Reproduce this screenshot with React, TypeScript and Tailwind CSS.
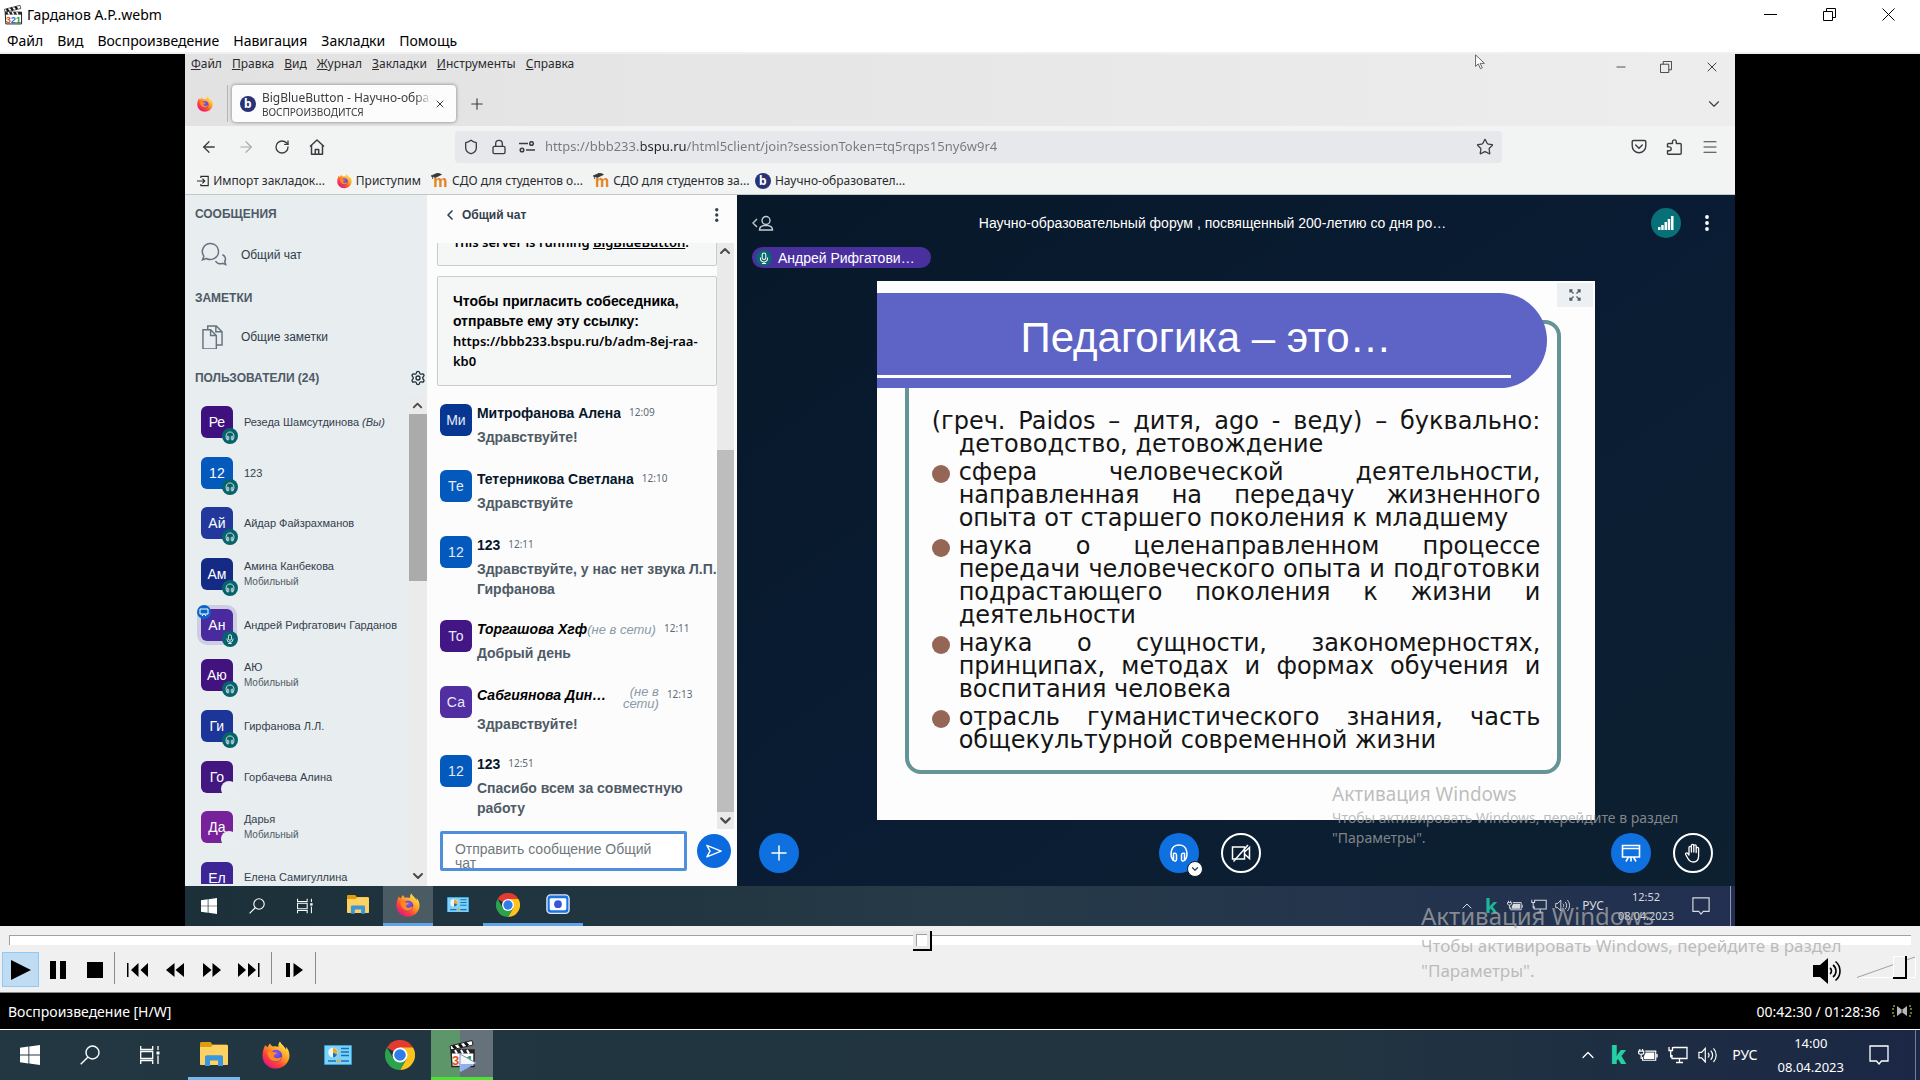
import type { ReactNode } from "react";
import {
  ArrowLeft,
  ArrowRight,
  ChevronDown,
  ChevronLeft,
  ChevronUp,
  Lock,
  Menu,
  Minus,
  Plus,
  RotateCw,
  Settings,
  Shield,
  Star,
  X,
} from "lucide-react";

type IconProps = { className?: string };

const playerMenu = ["Файл", "Вид", "Воспроизведение", "Навигация", "Закладки", "Помощь"];
const browserMenu = ["Файл", "Правка", "Вид", "Журнал", "Закладки", "Инструменты", "Справка"];

const users = [
  { short: "Ре", name: "Резеда Шамсутдинова", you: true, color: "bg-[#3f117f]", badge: "audio" },
  { short: "12", name: "123", color: "bg-[#0459bd]", badge: "audio" },
  { short: "Ай", name: "Айдар Файзрахманов", color: "bg-[#22389c]", badge: "audio" },
  { short: "Ам", name: "Амина Канбекова", mobile: true, color: "bg-[#152a85]", badge: "audio" },
  { short: "Ан", name: "Андрей Рифгатович Гарданов", color: "bg-[#4a2a9f]", badge: "mic" },
  { short: "Аю", name: "АЮ", mobile: true, color: "bg-[#42127f]", badge: "audio" },
  { short: "Ги", name: "Гирфанова Л.Л.", color: "bg-[#1b3598]", badge: "audio" },
  { short: "Го", name: "Горбачева Алина", color: "bg-[#42177f]", badge: "none" },
  { short: "Да", name: "Дарья", mobile: true, color: "bg-[#77219a]", badge: "none" },
  { short: "Ел", name: "Елена Самигуллина", color: "bg-[#3d2596]", badge: "cut" },
];

const messages = [
  { short: "Ми", name: "Митрофанова Алена", time: "12:09", text: "Здравствуйте!", color: "bg-[#073693]" },
  { short: "Те", name: "Тетерникова Светлана", time: "12:10", text: "Здравствуйте", color: "bg-[#0459bd]" },
  { short: "12", name: "123", time: "12:11", text: "Здравствуйте, у нас нет звука Л.П.\nГирфанова", color: "bg-[#0459bd]" },
  { short: "То", name: "Торгашова Хгф", time: "12:11", text: "Добрый день", color: "bg-[#431685]", offline: true },
  { short: "Са", name: "Сабгиянова Динара", time: "12:13", text: "Здравствуйте!", color: "bg-[#512fa3]", offline: true, long: true },
  { short: "12", name: "123", time: "12:51", text: "Спасибо всем за совместную\nработу", color: "bg-[#0459bd]" },
];

const slideItems = [
  "сфера человеческой деятельности, направленная на передачу жизненного опыта от старшего поколения к младшему",
  "наука о целенаправленном процессе передачи человеческого опыта и подготовки подрастающего поколения к жизни и деятельности",
  "наука о сущности, закономерностях, принципах, методах и формах обучения и воспитания человека",
  "отрасль гуманистического знания, часть общекультурной современной жизни",
];

/* ---------- icons ---------- */

const WindowsIcon = ({ className }: IconProps) => (
  <svg viewBox="0 0 20 20" className={className} fill="currentColor">
    <path d="M0 2.8 8.4 1.6v8H0zM9.3 1.5 20 0v9.6H9.3zM0 10.4h8.4v8L0 17.2zM9.3 10.4H20V20L9.3 18.5z" />
  </svg>
);

const SearchIcon = ({ className }: IconProps) => (
  <svg viewBox="0 0 20 20" className={className} fill="none" stroke="currentColor" strokeWidth="1.4">
    <circle cx="12.5" cy="7.5" r="6.5" />
    <path d="M7.8 12.2 .7 19.3" />
  </svg>
);

const TaskViewIcon = ({ className }: IconProps) => (
  <svg viewBox="0 0 20 20" className={className} fill="none" stroke="currentColor" strokeWidth="1.3">
    <path d="M.7 1v3.5h12V1M.7 19v-3.5h12V19M.7 6.5h12v7H.7zM18 1v4M18 10.5V19" />
    <path d="M16.5 6.5h3v3h-3z" fill="currentColor" stroke="none" />
  </svg>
);

const FolderIcon = ({ className }: IconProps) => (
  <svg viewBox="0 0 28 24" className={className}>
    <path d="M0 1.5C0 .7.7 0 1.500 0h9l2 2.500H27V8H0z" fill="#e09c10" />
    <path d="M0 5h11l2-2h14c.6 0 1 .4 1 1v18c0 .6-.4 1-1 1H1c-.6 0-1-.4-1-1z" fill="#fdd262" />
    <path d="M5 24v-9c0-1 .8-1.700 1.700-1.700h14.600c1 0 1.700.8 1.700 1.700v9h-5v-5.500h-8V24z" fill="#3b96dc" />
  </svg>
);

const FirefoxIcon = ({ className }: IconProps) => (
  <svg viewBox="0 0 32 32" className={className}>
    <defs>
      <linearGradient id="fox-body" x1="0.85" y1="0.1" x2="0.2" y2="0.95">
        <stop offset="0" stopColor="#ffe84a" />
        <stop offset="0.4" stopColor="#ff9a24" />
        <stop offset="0.7" stopColor="#ff4139" />
        <stop offset="1" stopColor="#e31587" />
      </linearGradient>
      <radialGradient id="fox-globe" cx="0.5" cy="0.3" r="0.7">
        <stop offset="0" stopColor="#9059ff" />
        <stop offset="1" stopColor="#4b36b4" />
      </radialGradient>
    </defs>
    <path
      d="M20.500.5c-1.600 1.800-2 4-1.600 6.100-2-.8-4.400-1-6.400-.3C11 5.500 9.700 4.400 9.300 2.800 7.900 4 7 5.600 6.700 7.100 5.500 6.800 4.300 5.700 3.800 4.600 1.700 8.200.6 12.500.6 17c0 8.300 6.900 14.500 15.400 14.500S31.400 25 31.400 16.700c0-4.500-1.700-8-4-10.200.3 1.200.3 2.500.1 3.400C26 5.800 22.300 4.500 20.500.5z"
      fill="url(#fox-body)"
    />
    <circle cx="16" cy="17" r="7" fill="url(#fox-globe)" />
    <path d="M6 12.500c2.500-1.600 5-1.300 7 .2 1.200.6 3 .3 4 .8-.5 1.600-3.200 1.900-3.600 3.400-.3 1.800 2 3.300 4.300 2.800 2-.4 3.300-1.700 5-1-1.200 3.300-4 5-7 4.800C10.700 23.200 6.300 19 6 12.500z" fill="#ff8a1f" />
  </svg>
);

const NewsCardIcon = ({ className }: IconProps) => (
  <svg viewBox="0 0 28 20" className={className}>
    <rect width="28" height="20" rx="1" fill="#33a0dc" />
    <rect x="1" y="1" width="26" height="18" fill="#7fd2f7" />
    <circle cx="9" cy="7.500" r="4.800" fill="#e8f6fd" />
    <path d="M9 7.500V3a4.800 4.800 0 0 1 4.300 6.600z" fill="#f5a623" />
    <path d="M9 7.500l4.300 2.100A4.800 4.800 0 0 1 9 12.300z" fill="#1673b8" />
    <path d="M17 3.500h8M17 7h8M17 10.500h8M4 16h8M17 16h8" stroke="#1673b8" strokeWidth="1.500" />
    <circle cx="14.500" cy="16" r="1.500" fill="#f5a623" />
  </svg>
);

const ChromeIcon = ({ className }: IconProps) => (
  <svg viewBox="0 0 32 32" className={className}>
    <path d="M16 16 2.100 8A16 16 0 0 1 29.900 8z" fill="#e33b2e" />
    <path d="M16 16V8h13.900A16 16 0 0 1 16 32l7-12z" fill="#fcc31e" />
    <path d="M16 16l6.900 4L16 32A16 16 0 0 1 2.100 8l7 12z" fill="#2da24c" />
    <circle cx="16" cy="16" r="8" fill="#fff" />
    <circle cx="16" cy="16" r="6.200" fill="#2f7de9" />
  </svg>
);

const CameraAppIcon = ({ className }: IconProps) => (
  <svg viewBox="0 0 26 22" className={className}>
    <rect x="1" y="1" width="24" height="20" rx="4" fill="#1b74e4" stroke="#dfe9f8" strokeWidth="1.500" />
    <rect x="4" y="4.500" width="18" height="13" rx="1.500" fill="#fff" />
    <circle cx="13" cy="11" r="4.200" fill="#3b55d9" />
  </svg>
);

const ClapperIcon = ({ className }: IconProps) => (
  <svg viewBox="0 0 28 28" className={className}>
    <path d="M2 6 24 .5 25 5 3 10z" fill="#fff" stroke="#222" strokeWidth="1" />
    <path d="m5 5.500 3 3.200M11 4l3 3.200M17 2.500l3 3.200" stroke="#111" strokeWidth="3" />
    <path d="M3 10h23v16.500H4z" fill="#fff" stroke="#222" strokeWidth="1.400" />
    <path d="M3 10h23v3.500H3z" fill="#222" />
    <path d="m7 10 2 3.500M13 10l2 3.500M19 10l2 3.500" stroke="#fff" strokeWidth="2" />
    <text x="4" y="25" fontSize="13" fontWeight="700" fill="#d9531e" fontFamily="Liberation Sans">3</text>
    <text x="11" y="25" fontSize="13" fontWeight="700" fill="#2a6fd0" fontFamily="Liberation Sans">2</text>
    <text x="18" y="25" fontSize="13" fontWeight="700" fill="#2b9a33" fontFamily="Liberation Sans">1</text>
  </svg>
);

const HeadphonesIcon = ({ className }: IconProps) => (
  <svg viewBox="0 0 20 20" className={className} fill="none" stroke="currentColor" strokeWidth="1.500">
    <path d="M4.500 17.500C.5 13 1 2 10 2s9.500 11 5.500 15.500" />
    <path d="M4.500 10.500c1.500-.8 3 0 3 1.500v4.500c0 1.500-1.500 2-3 1zM15.500 10.500c-1.500-.8-3 0-3 1.500v4.500c0 1.500 1.500 2 3 1z" />
  </svg>
);

const MicIcon = ({ className }: IconProps) => (
  <svg viewBox="0 0 20 20" className={className} fill="none" stroke="currentColor" strokeWidth="1.700">
    <rect x="7" y="1.500" width="6" height="11" rx="3" />
    <path d="M4 9v1.500a6 6 0 0 0 12 0V9M10 16.500v2.500M6.500 19h7" />
  </svg>
);

const CameraOffIcon = ({ className }: IconProps) => (
  <svg viewBox="0 0 20 20" className={className} fill="none" stroke="currentColor" strokeWidth="1.500">
    <path d="M1.500 4h12v12h-12zM13.500 9l5-4.500v11l-5-4.500" />
    <path d="M2.500 18.500 17 2" />
  </svg>
);

const PresentationIcon = ({ className }: IconProps) => (
  <svg viewBox="0 0 20 20" className={className} fill="none" stroke="currentColor" strokeWidth="1.600">
    <path d="M1.500 2.500h17V14h-17zM1.500 5.500h17M10 14v4.500M7.500 14l-2.500 4.500M12.500 14l2.500 4.500" />
  </svg>
);

const HandIcon = ({ className }: IconProps) => (
  <svg viewBox="0 0 20 20" className={className} fill="none" stroke="currentColor" strokeWidth="1.300" strokeLinejoin="round" strokeLinecap="round">
    <path d="M6 11V4.500a1.200 1.200 0 0 1 2.400 0V9M8.400 9V2.500a1.200 1.200 0 0 1 2.400 0V9M10.800 9V3a1.200 1.200 0 0 1 2.400 0v6.500M13.200 9.500V5.500a1.200 1.200 0 0 1 2.400 0V13c0 3.500-2 6-5.400 6-3 0-4.400-1.700-5.600-4L2.700 11.500c-.6-1.300.9-2.300 1.900-1.200L6 12" />
  </svg>
);

const ChatBubblesIcon = ({ className }: IconProps) => (
  <svg viewBox="0 0 26 26" className={className} fill="none" stroke="currentColor" strokeWidth="1.500">
    <path d="M9.500 1.500a8 8 0 0 1 3 15.400c-2.300 1-5 .7-7-.4l-4 1.300 1.400-3.600A8 8 0 0 1 9.500 1.500z" />
    <path d="M14.500 19c1.200 2.500 4.400 3.600 7 2.300l3.200 1.200-1-3c1.600-2.600.6-5.600-2.300-6.800" />
  </svg>
);

const NotesIcon = ({ className }: IconProps) => (
  <svg viewBox="0 0 22 26" className={className} fill="none" stroke="currentColor" strokeWidth="1.500">
    <path d="M1 5h8l6 6v14H1zM9 5v6h6" />
    <path d="M6 5V1h9l6 6v14h-6M14.500 1v6H21" />
  </svg>
);

const MonitorIcon = ({ className }: IconProps) => (
  <svg viewBox="0 0 20 18" className={className} fill="none" stroke="currentColor" strokeWidth="1.300">
    <path d="M5 1.500h14v11H4V9M8 16.500h7M11.500 12.500v4M1 1v3.500h3.500V1M2.700 4.500v7" />
  </svg>
);

const BatteryIcon = ({ className }: IconProps) => (
  <svg viewBox="0 0 22 16" className={className} fill="none" stroke="currentColor" strokeWidth="1.300">
    <path d="M8 3.500h11.500v10H5V10M21 6.500v4" />
    <path d="M8.500 5h9.500v7H6.500V9z" fill="currentColor" stroke="none" />
    <path d="M2 1v2.500M5 1v2.500M.7 3.500h5.600v2c0 2-5.600 2-5.600 0zM3.500 7v5" />
  </svg>
);

const VolumeIcon = ({ className }: IconProps) => (
  <svg viewBox="0 0 22 18" className={className} fill="none" stroke="currentColor" strokeWidth="1.300">
    <path d="M1 6h3l4-4.500v15L4 12H1zM11 6.500c1.300 1.400 1.300 3.600 0 5M14 4c2.700 2.800 2.700 7.200 0 10M17 1.500c4 4.200 4 10.800 0 15" />
  </svg>
);

const NotificationIcon = ({ className }: IconProps) => (
  <svg viewBox="0 0 20 20" className={className} fill="none" stroke="currentColor" strokeWidth="1.300">
    <path d="M1 1h18v15h-6.500L10 19l-2.500-3H1z" />
  </svg>
);

const MoodleIcon = () => (
  <span className="relative flex h-4 w-4 items-center justify-center">
    <span className="pt-0.5 font-['Liberation_Sans',sans-serif] text-base leading-4 font-bold text-[#e5821b]">m</span>
    <svg viewBox="0 0 16 8" className="absolute top-0 -left-0.5 h-1.5 w-3">
      <path d="M0 4 9 0l5 2-8 4zM2 4v4" fill="#3b3833" stroke="#3b3833" />
    </svg>
  </span>
);

const BigBlueButtonIcon = () => (
  <span className="flex h-4 w-4 shrink-0 items-center justify-center rounded-full bg-[#283274] text-xs leading-4 font-bold text-white">
    b
  </span>
);

const RestoreIcon = ({ className }: IconProps) => (
  <svg viewBox="0 0 13 13" className={className} fill="none" stroke="currentColor">
    <path d="M.5 3.500h9v9h-9zM3.500 3.500v-3h9v9h-3" />
  </svg>
);

const Kebab = ({ className }: IconProps) => (
  <svg viewBox="0 0 4 16" className={className} fill="currentColor">
    <circle cx="2" cy="2" r="1.900" />
    <circle cx="2" cy="8" r="1.900" />
    <circle cx="2" cy="14" r="1.900" />
  </svg>
);

/* ---------- taskbars ---------- */

const Tray = ({ time, small }: { time: string; small?: boolean }) => (
  <div className="ml-auto flex h-full items-center text-white">
    <div className={small ? "flex items-center gap-2 text-[#d5dade]" : "flex items-center gap-[10px]"}>
      <ChevronUp className={small ? "size-4" : "size-5"} strokeWidth={1.5} />
      <span className={small ? "w-4 text-center text-xl leading-5 font-bold text-[#1cb89b]" : "w-5 text-center text-2xl leading-6 font-black text-[#25d0a5]"}>
        k
      </span>
      <BatteryIcon className={small ? "w-4" : "w-5"} />
      <MonitorIcon className={small ? "w-4" : "w-5"} />
      <VolumeIcon className={small ? "w-4" : "w-5"} />
    </div>
    <span className={small ? "ml-[11px] text-xs text-[#d5dade]" : "ml-3.5 text-sm"}>РУС</span>
    <div className={small ? "ml-3.5 text-center text-[11px] leading-[19px] text-[#d5dade]" : "ml-5 text-center text-[13px] leading-6"}>
      <p>{time}</p>
      <p>08.04.2023</p>
    </div>
    <NotificationIcon className={small ? "mr-5 ml-[18px] w-4.5 text-[#d5dade]" : "mr-[26px] ml-[25px] w-5"} />
    <span className={small ? "mr-1 h-full w-px bg-white/50" : "mr-1 h-full w-px bg-white/40"} />
  </div>
);

const InnerTaskButton = ({ label, active, running, children }: { label: string; active?: boolean; running?: boolean; children: ReactNode }) => (
  <button
    aria-label={label}
    className={`flex h-full w-[50px] items-center justify-center border-b-3 text-white ${
      active ? "bg-white/20 border-[#5da3e6]" : running ? "border-[#5da3e6]" : "border-transparent"
    }`}
  >
    {children}
  </button>
);

const InnerTaskbar = () => (
  <footer className="flex h-10 shrink-0 items-stretch bg-linear-to-r from-[#1b3039] via-[#263a47] to-[#222f51] text-white">
    <button aria-label="Пуск" className="flex w-12 items-center justify-center"><WindowsIcon className="size-4" /></button>
    <button aria-label="Поиск" className="flex w-12 items-center justify-center"><SearchIcon className="size-4" /></button>
    <button aria-label="Представление задач" className="flex w-12 items-center justify-center"><TaskViewIcon className="size-4" /></button>
    <div className="ml-1 flex">
      <InnerTaskButton label="Проводник"><FolderIcon className="w-[22px]" /></InnerTaskButton>
      <InnerTaskButton label="Firefox" active><FirefoxIcon className="size-6" /></InnerTaskButton>
      <InnerTaskButton label="Новости"><NewsCardIcon className="w-[22px]" /></InnerTaskButton>
      <InnerTaskButton label="Chrome" running><ChromeIcon className="size-6" /></InnerTaskButton>
      <InnerTaskButton label="Запись" running><CameraAppIcon className="w-6" /></InnerTaskButton>
    </div>
    <Tray time="12:52" small />
  </footer>
);

const Taskbar = () => (
  <footer className="flex h-[50px] shrink-0 bg-linear-to-r from-[#223742] via-[#213440] via-70% to-[#1b2745] text-white">
    <div className="flex">
      <button aria-label="Пуск" className="flex w-15 items-center justify-center"><WindowsIcon className="size-5" /></button>
      <button aria-label="Поиск" className="flex w-15 items-center justify-center"><SearchIcon className="size-5" /></button>
      <button aria-label="Представление задач" className="flex w-15 items-center justify-center"><TaskViewIcon className="size-5" /></button>
    </div>
    <div className="ml-[3px] flex">
      <button aria-label="Проводник" className="mx-[5px] flex w-[52px] items-center justify-center border-b-3 border-[#76b9ed]">
        <FolderIcon className="w-7" />
      </button>
      <button aria-label="Firefox" className="flex w-[62px] items-center justify-center"><FirefoxIcon className="size-7" /></button>
      <button aria-label="Новости" className="flex w-[62px] items-center justify-center"><NewsCardIcon className="w-7" /></button>
      <button aria-label="Chrome" className="flex w-[62px] items-center justify-center"><ChromeIcon className="size-[30px]" /></button>
      <button
        aria-label="Media Player"
        className="relative flex w-[62px] items-center justify-center border-b-3 border-[#4be32f] bg-linear-to-r from-[#5d9669] from-47% to-[#65727c] to-47%"
      >
        <ClapperIcon className="size-7" />
        <svg viewBox="0 0 18 20" className="absolute right-4 bottom-1 h-5 w-4.5">
          <path d="M1 1 17 10 1 19z" fill="#f1f6ff" stroke="#7b8fb8" strokeWidth="1" />
          <path d="M1.500 11h13.500L1.500 18.500z" fill="#8fb0ee" />
        </svg>
      </button>
    </div>
    <Tray time="14:00" />
  </footer>
);

/* ---------- browser ---------- */

const BrowserHeader = () => (
  <header className="shrink-0 text-[#3c3c40]">
    <div className="bg-linear-to-r from-[#e2e2e3] to-[#ededed]">
      <div className="flex h-[26px] items-center">
        <nav className="flex gap-2.5 self-start pl-1.5 text-xs leading-5 text-[#2b2b2e]">
          {browserMenu.map((item) => (
            <button key={item}>
              <span className="underline">{item[0]}</span>
              {item.slice(1)}
            </button>
          ))}
        </nav>
        <div className="ml-auto flex items-center gap-8 pr-[15px]">
          <button aria-label="Свернуть"><Minus className="size-3.5" strokeWidth={1.5} /></button>
          <button aria-label="Развернуть"><RestoreIcon className="size-3" /></button>
          <button aria-label="Закрыть окно"><X className="size-4" strokeWidth={1.5} /></button>
        </div>
      </div>
      <div className="flex h-[46px] items-center pt-[5px] pb-1">
        <div className="flex h-full w-[43px] items-center justify-center border-r border-[#b4b4b6] pr-0.5">
          <FirefoxIcon className="size-4" />
        </div>
        <div className="ml-1 flex h-full w-[224px] items-center gap-1.5 rounded bg-[#fcfcfc] px-2 shadow-[0_0_3px_1px_#a5a5a8]">
          <BigBlueButtonIcon />
          <div className="min-w-0 flex-1 overflow-hidden mask-r-from-90% text-xs leading-4 whitespace-nowrap">
            <p>BigBlueButton - Научно-образовательный</p>
            <p className="text-[10px] leading-3">ВОСПРОИЗВОДИТСЯ</p>
          </div>
          <button aria-label="Закрыть вкладку" className="-ml-1 pr-0.5"><X className="size-3" /></button>
        </div>
        <button aria-label="Новая вкладка" className="ml-3"><Plus className="size-4.5" strokeWidth={1.5} /></button>
        <ChevronDown className="mr-3 ml-auto size-4.5" strokeWidth={1.5} />
      </div>
    </div>
    <div className="flex h-[41px] items-center bg-[#f2f4f4]">
      <div className="flex w-[270px] items-center gap-[19px] pl-[15px]">
        <button aria-label="Назад"><ArrowLeft className="size-4.5" strokeWidth={1.7} /></button>
        <button aria-label="Вперёд" className="text-[#a8a8ab]"><ArrowRight className="size-4.5" strokeWidth={1.5} /></button>
        <button aria-label="Обновить"><RotateCw className="size-4" strokeWidth={2} /></button>
        <button aria-label="Домой">
          <svg viewBox="0 0 16 16" className="size-4" fill="none" stroke="currentColor" strokeWidth="1.500" strokeLinejoin="round">
            <path d="M1 7.500 8 1l7 6.500M2.500 6.500v8.700h11V6.500M6.300 15v-4.500h3.400V15" />
          </svg>
        </button>
      </div>
      <div className="flex h-8 flex-1 items-center gap-3 rounded bg-[#e7e8ec] px-2">
        <Shield className="size-4" strokeWidth={2} />
        <Lock className="size-4" strokeWidth={2} />
        <svg viewBox="0 0 16 12" className="w-4" fill="none" stroke="currentColor" strokeWidth="1.500">
          <path d="M0 2.500h9M7 9h9" />
          <circle cx="12.500" cy="2.500" r="1.800" />
          <circle cx="3" cy="9" r="1.800" />
        </svg>
        <input
          aria-label="Адресная строка"
          defaultValue="https://bbb233.bspu.ru/html5client/join?sessionToken=tq5rqps15ny6w9r4"
          className="-ml-0.5 flex-1 bg-[linear-gradient(to_right,#77777a_96px,#222224_96px,#222224_141px,#77777a_141px)] bg-clip-text text-[13px] text-transparent outline-none"
        />
        <button aria-label="Добавить в закладки"><Star className="size-4.5" strokeWidth={1.7} /></button>
      </div>
      <div className="flex w-[233px] items-center justify-end gap-[19px] pr-4">
        <svg viewBox="0 0 16 16" className="size-4" fill="none" stroke="currentColor" strokeWidth="1.400" strokeLinecap="round">
          <path d="M2.500 1.500h11c.8 0 1.300.5 1.300 1.300V7a6.800 6.800 0 0 1-13.600 0V2.800c0-.8.500-1.300 1.300-1.300zM4.700 6 8 9.200 11.300 6" />
        </svg>
        <svg viewBox="0 0 16 16" className="size-4" fill="none" stroke="currentColor" strokeWidth="1.400" strokeLinejoin="round">
          <path d="M2.500 4.500h4V2.800a1.900 1.900 0 0 1 3.800 0v1.700h3.900a1 1 0 0 1 1 1v8.700a1 1 0 0 1-1 1H2.500a1 1 0 0 1-1-1v-2.500h1.800a1.900 1.900 0 0 0 0-3.800H1.500V5.500a1 1 0 0 1 1-1z" />
        </svg>
        <Menu className="size-4.5" strokeWidth={1.5} />
      </div>
    </div>
    <div className="flex h-7 items-center gap-3 border-b border-[#c3c7c6] bg-[#f2f4f4] pl-3 text-xs text-[#2b2b2e]">
      <a href="#import" className="flex w-32 items-center gap-1 whitespace-nowrap">
        <svg viewBox="0 0 16 16" className="size-4" fill="none" stroke="currentColor" strokeWidth="1.500">
          <path d="M5 4V2h9.500v12H5v-2M0 8h10M7 5l3 3-3 3" />
        </svg>
        Импорт закладок...
      </a>
      <a href="#start" className="flex w-21 items-center gap-1 whitespace-nowrap">
        <FirefoxIcon className="size-4" />
        Приступим
      </a>
      <a href="#sdo-o" className="flex w-[150px] items-center gap-1 whitespace-nowrap">
        <MoodleIcon />
        СДО для студентов о...
      </a>
      <a href="#sdo-za" className="flex w-[148px] items-center gap-1 whitespace-nowrap">
        <MoodleIcon />
        СДО для студентов за...
      </a>
      <a href="#bbb" className="flex items-center gap-1 whitespace-nowrap">
        <BigBlueButtonIcon />
        Научно-образовател...
      </a>
    </div>
  </header>
);

/* ---------- conference ---------- */

const UserBadge = ({ kind }: { kind: string }) => {
  if (kind === "cut") return null;
  if (kind === "none") return <span className="absolute -right-1 -bottom-1 size-4 rounded-full bg-[#e9eef0]" />;
  return (
    <span className="absolute -right-[5px] -bottom-[6px] flex size-4 items-center justify-center rounded-full bg-[#07636b] text-white">
      {kind === "mic" ? <MicIcon className="size-2.5" /> : <HeadphonesIcon className="size-2.5" />}
    </span>
  );
};

const UserList = () => (
  <aside className="flex w-[242px] shrink-0 flex-col bg-[#e8edef] pt-[9px] text-[#4e5a66]">
    <h2 className="pl-2.5 text-xs leading-5 font-bold">СООБЩЕНИЯ</h2>
    <a href="#chat" className="flex h-[62px] items-center gap-3.5 pl-4 text-xs text-[#2f3c49]">
      <ChatBubblesIcon className="size-[26px] text-[#66727f]" />
      Общий чат
    </a>
    <h2 className="pt-0.5 pl-2.5 text-xs leading-5 font-bold">ЗАМЕТКИ</h2>
    <a href="#notes" className="flex h-[58px] items-center gap-[18px] pl-[17px] text-xs text-[#2f3c49]">
      <NotesIcon className="w-[21px] text-[#66727f]" />
      Общие заметки
    </a>
    <div className="flex h-[22px] items-center justify-between pt-0.5 pl-2.5">
      <h2 className="text-xs leading-5 font-bold">ПОЛЬЗОВАТЕЛИ (24)</h2>
      <button aria-label="Настройки"><Settings className="mr-px size-4 text-[#1f2f3d]" strokeWidth={2} /></button>
    </div>
    <div className="mt-[9px] flex min-h-0 flex-1">
      <ul className="flex min-w-0 flex-1 flex-col justify-between pt-[9px] pb-0.5 pl-4">
        {users.map((user) => (
          <li key={user.short} className={`flex gap-[11px] ${user.badge === "cut" ? "h-[22px] overflow-hidden" : "h-8 items-center"}`}>
            <div className={`relative flex size-8 shrink-0 items-center justify-center rounded-md text-sm text-white ${user.color} ${user.badge === "mic" ? "shadow-[0_0_0_4px_#cfcde2]" : ""}`}>
              {user.short}
              {user.badge === "mic" && (
                <span className="absolute -top-1 -left-1 flex size-3.5 items-center justify-center rounded-full bg-[#0b66c9]">
                  <svg viewBox="0 0 10 10" className="size-2.5" fill="none" stroke="currentColor">
                    <path d="M1 2h8v5H1zM3 9l1.500-2M7 9 5.500 7" />
                  </svg>
                </span>
              )}
              <UserBadge kind={user.badge} />
            </div>
            <div className={`text-[11px] leading-4 whitespace-nowrap text-[#33404d] ${user.badge === "cut" ? "pt-[7px]" : ""}`}>
              <p>
                {user.name} {user.you && <i>(Вы)</i>}
              </p>
              {user.mobile && <p className="text-[10px] leading-4 text-[#4e5a66]">Мобильный</p>}
            </div>
          </li>
        ))}
      </ul>
      <div className="flex w-[18px] flex-col items-center bg-[#ebebec] text-[#4b4b4b]">
        <ChevronUp className="my-px size-[15px]" strokeWidth={3} />
        <div className="h-[167px] w-full bg-[#ababac]" />
        <ChevronDown className="mt-auto mb-0.5 size-4" strokeWidth={3} />
      </div>
    </div>
  </aside>
);

const Chat = () => (
  <section className="flex w-[310px] shrink-0 flex-col bg-[#fcfcfc]">
    <div className="mb-2 flex h-10 items-center pr-4.5 pl-[15px] text-[#33404d]">
      <button className="flex items-center gap-1 text-xs font-bold">
        <ChevronLeft className="size-4" strokeWidth={2.5} />
        Общий чат
      </button>
      <button aria-label="Параметры чата" className="ml-auto"><Kebab className="h-3.5" /></button>
    </div>
    <div className="flex min-h-0 flex-1 pr-[3px]">
      <div className="min-w-0 flex-1 overflow-hidden pl-2.5 text-sm leading-5">
        <div className="-mt-[12px] rounded-xs border border-[#c5cdd1] bg-[#f5f7f7] px-[15px] pb-[13px] font-['Noto_Sans',sans-serif] text-[13px] leading-5 font-semibold">
          This server is running <a href="#bigbluebutton" className="underline">BigBlueButton</a>.
        </div>
        <div className="mt-2.5 rounded-xs border border-[#c5cdd1] bg-[#f5f7f7] px-[15px] py-[14px] font-bold">
          <p className="whitespace-nowrap">
            Чтобы пригласить собеседника,
            <br />
            отправьте ему эту ссылку:
          </p>
          <p className="font-['Noto_Sans',sans-serif] text-[13px] leading-5 font-semibold">https://bbb233.bspu.ru/b/adm-8ej-raa-kb0</p>
        </div>
        <ul className="mt-[18px] pl-[3px]">
          {messages.map((message) => (
            <li key={message.name + message.time} className="flex min-h-[66px] gap-[5px] pb-[21px]">
              <div className={`flex size-8 shrink-0 items-center justify-center rounded-md text-sm text-[#e6ecf7] ${message.color}`}>
                {message.short}
              </div>
              <div className="min-w-0 flex-1 text-[#4e5a66]">
                <div className="flex items-start leading-[19px]">
                  <span className={`truncate font-bold ${message.offline ? "italic text-black" : "text-[#06172a]"} ${message.long ? "w-[130px]" : ""}`}>
                    {message.name}
                  </span>
                  {message.offline && (
                    <i className={`text-[13px] text-[#8b9aa8] ${message.long ? "ml-4 w-[36px] text-right leading-3" : "shrink-0"}`}>(не в сети)</i>
                  )}
                  <time className="ml-2 font-['Noto_Sans',sans-serif] text-[10px] leading-4 text-[#5d6a76]">{message.time}</time>
                </div>
                <p className="mt-1 font-bold whitespace-pre">{message.text}</p>
              </div>
            </li>
          ))}
        </ul>
      </div>
      <div className="flex w-[17px] flex-col items-center bg-[#eaeaeb] text-[#4b4b4b]">
        <ChevronUp className="size-4" strokeWidth={3} />
        <div className="mt-auto h-[362px] w-full bg-[#bdbdbe]" />
        <ChevronDown className="size-[17px]" strokeWidth={3} />
      </div>
    </div>
    <form className="mb-[15px] flex items-center gap-2.5 pt-0.5 pr-1.5 pl-[13px]">
      <textarea
        aria-label="Сообщение"
        placeholder="Отправить сообщение Общий чат"
        className="h-10 flex-1 resize-none overflow-hidden rounded-xs border-3 border-[#4f8fdb] bg-white px-3 py-2 text-sm leading-[14px] outline-none placeholder:text-[#72777d]"
      />
      <button aria-label="Отправить" className="flex size-[34px] items-center justify-center rounded-full bg-[#0a6ade] text-white">
        <svg viewBox="0 0 18 16" className="w-4" fill="none" stroke="currentColor" strokeWidth="1.600" strokeLinejoin="round">
          <path d="M1 1.500 17 8 1 14.500 4.500 8z" />
        </svg>
      </button>
    </form>
  </section>
);

const Slide = () => (
  <div className="relative flex aspect-[4/3] h-full flex-col bg-[#fdfdfd] pt-3 font-['DejaVu_Sans',sans-serif] text-[#151515]">
    <div className="absolute top-[39px] right-[34px] bottom-[46px] left-7 rounded-2xl border-4 border-[#649496]" />
    <button aria-label="Во весь экран" className="absolute top-0.5 right-0.5 flex h-6 w-9 items-center justify-center bg-[#edf0f2] text-[#4e5a66]">
      <svg viewBox="0 0 12 12" className="size-3" fill="none" stroke="currentColor" strokeWidth="1.300">
        <path d="M1 3.500V1h2.500M1 1l3.500 3.500M8.500 1H11v2.500M11 1 7.500 4.500M1 8.500V11h2.500M1 11l3.500-3.500M8.500 11H11V8.500M11 11 7.500 7.500" />
      </svg>
    </button>
    <div className="relative mr-12 flex h-[95px] flex-col rounded-r-full bg-[#5d64c6]">
      <h1 className="flex flex-1 items-center justify-center pt-2 pr-3 font-['Liberation_Sans',sans-serif] text-[42px] leading-none text-white">
        Педагогика – это…
      </h1>
      <div className="mr-9 mb-2.5 h-[3px] bg-white" />
    </div>
    <div className="relative mt-[22px] flex flex-col gap-[5px] px-[55px] text-justify text-2xl leading-[23px]">
      <p className="pl-[27px] -indent-[27px]">(греч. Paidos – дитя, ago - веду) – буквально: детоводство, детовождение</p>
      <ul className="flex flex-col gap-[5px]">
        {slideItems.map((item) => (
          <li key={item} className="flex gap-[9px]">
            <span className="mt-1 size-[18px] shrink-0 rounded-full bg-[#956656]" />
            <p className="flex-1">{item}</p>
          </li>
        ))}
      </ul>
    </div>
  </div>
);

const Conference = () => (
  <main className="flex min-w-0 flex-1 flex-col bg-linear-to-br from-[#071829] via-[#0a1c33] to-[#0d2030] text-white">
    <div className="flex h-[52px] shrink-0 items-center pt-1 pr-[26px] pl-[15px]">
      <button aria-label="Показать участников" className="flex items-center text-[#c3ccd3]">
        <svg viewBox="0 0 22 16" className="w-[22px]" fill="none" stroke="currentColor" strokeWidth="1.400">
          <path d="M5 4 1 8l4 4M7.500 15c0-2.500 1.500-4 4.500-4.500h4c3 .5 4.500 2 4.500 4.500z" />
          <circle cx="14" cy="5.500" r="4" />
        </svg>
      </button>
      <p className="flex-1 text-center text-[14px]">Научно-образовательный форум , посвященный 200-летию со дня ро…</p>
      <div className="flex items-center gap-6">
        <button aria-label="Соединение" className="flex size-[30px] items-center justify-center rounded-full bg-[#087079]">
          <svg viewBox="0 0 16 14" className="w-4" fill="currentColor">
            <path d="M0 11h2.500v3H0zM3.200 9h2.500v5H3.200zM6.500 6H9v8H6.500zM9.700 3h2.500v11H9.700zM13 0h2.500v14H13z" />
          </svg>
        </button>
        <button aria-label="Параметры"><Kebab className="h-4" /></button>
      </div>
    </div>
    <div className="ml-[15px] flex h-[21px] w-[179px] shrink-0 items-center gap-1.5 rounded-full bg-[#4a2f9f] pl-1 text-sm">
      <span className="flex size-4 items-center justify-center rounded-full bg-[#0a6670]"><MicIcon className="size-3" /></span>
      Андрей Рифгатови…
    </div>
    <div className="mt-[13px] flex min-h-0 flex-1 justify-center">
      <Slide />
    </div>
    <div className="mt-[13px] mb-[13px] grid shrink-0 grid-cols-3 items-center px-[22px]">
      <button aria-label="Действия" className="flex size-10 items-center justify-center rounded-full bg-[#0f70e0]">
        <Plus className="size-6" strokeWidth={1.5} />
      </button>
      <div className="flex justify-center gap-[22px] pr-13">
        <button aria-label="Звук" className="relative flex size-10 items-center justify-center rounded-full bg-[#0f70e0]">
          <HeadphonesIcon className="size-5" />
          <span className="absolute -right-1 -bottom-1 flex size-4 items-center justify-center rounded-full border border-[#0b1d30] bg-white text-[#33404d]">
            <ChevronDown className="size-2.5" strokeWidth={3} />
          </span>
        </button>
        <button aria-label="Камера" className="flex size-10 items-center justify-center rounded-full border-2 border-white">
          <CameraOffIcon className="size-5" />
        </button>
      </div>
      <div className="flex justify-end gap-[22px]">
        <button aria-label="Презентация" className="flex size-10 items-center justify-center rounded-full bg-[#0f70e0]">
          <PresentationIcon className="size-5" />
        </button>
        <button aria-label="Поднять руку" className="flex size-10 items-center justify-center rounded-full border-2 border-white">
          <HandIcon className="size-5" />
        </button>
      </div>
    </div>
  </main>
);

/* ---------- player ---------- */

const PlayerButton = ({ label, active, children }: { label: string; active?: boolean; children: ReactNode }) => (
  <button
    aria-label={label}
    className={`flex h-[35px] w-[37px] items-center justify-center border text-black ${
      active ? "border-[#90c8f6] bg-[#c0dcf3]" : "border-transparent"
    }`}
  >
    {children}
  </button>
);

const PlayerControls = () => (
  <div className="shrink-0 bg-[#f0f0f0]">
    <div className="flex h-[26px] items-start px-[9px] pt-[9px]">
      <input
        type="range"
        aria-label="Позиция"
        min={0}
        max={5316}
        defaultValue={2550}
        className="h-2.5 w-full appearance-none border-t border-l border-[#a0a0a0] bg-white [&::-webkit-slider-thumb]:h-5 [&::-webkit-slider-thumb]:w-[19px] [&::-webkit-slider-thumb]:appearance-none [&::-webkit-slider-thumb]:border-r-2 [&::-webkit-slider-thumb]:border-b-2 [&::-webkit-slider-thumb]:border-black [&::-webkit-slider-thumb]:bg-white [&::-webkit-slider-thumb]:shadow-[inset_0_0_0_3px_#e8e8e8,inset_4px_4px_0_0_#a0a0a0]"
      />
    </div>
    <div className="flex h-10 items-start pr-1 pl-0.5">
      <PlayerButton label="Воспроизвести" active>
        <svg viewBox="0 0 20 20" className="size-5" fill="currentColor"><path d="M0 0 20 10 0 20z" /></svg>
      </PlayerButton>
      <PlayerButton label="Пауза">
        <svg viewBox="0 0 16 18" className="w-4" fill="currentColor"><path d="M0 0h6v18H0zM10 0h6v18h-6z" /></svg>
      </PlayerButton>
      <PlayerButton label="Стоп">
        <svg viewBox="0 0 16 18" className="w-4" fill="currentColor"><path d="M0 1h16v16H0z" /></svg>
      </PlayerButton>
      <span className="mr-1 ml-px h-8 w-px bg-[#8a8a8a]" />
      <PlayerButton label="В начало">
        <svg viewBox="0 0 22 14" className="w-[22px]" fill="currentColor"><path d="M0 0h1.500v14H0zM11.500 0v14L4 7zM21 0v14l-7.500-7z" /></svg>
      </PlayerButton>
      <PlayerButton label="Назад">
        <svg viewBox="0 0 18 14" className="w-4.5" fill="currentColor"><path d="M8.500 0v14L0 7zM18 0v14L9.500 7z" /></svg>
      </PlayerButton>
      <PlayerButton label="Вперёд">
        <svg viewBox="0 0 18 14" className="w-4.5" fill="currentColor"><path d="M0 0v14l8.500-7zM9.500 0v14L18 7z" /></svg>
      </PlayerButton>
      <PlayerButton label="В конец">
        <svg viewBox="0 0 22 14" className="w-[22px]" fill="currentColor"><path d="M0 0v14l8-7zM10 0v14l8-7zM20 0h1.500v14H20z" /></svg>
      </PlayerButton>
      <span className="mx-1 h-8 w-px bg-[#8a8a8a]" />
      <PlayerButton label="Покадрово">
        <svg viewBox="0 0 18 14" className="w-4.5" fill="currentColor"><path d="M0 0h4v14H0zM7.500 0v14L17 7z" /></svg>
      </PlayerButton>
      <span className="mx-0.5 h-8 w-px bg-[#8a8a8a]" />
      <button aria-label="Громкость" className="mt-1.5 ml-auto text-black">
        <svg viewBox="0 0 28 26" className="w-7">
          <path d="M0 7h7l8-7v26l-8-7H0z" fill="currentColor" />
          <path d="M17 10c2 1.500 2 4.500 0 6M20 7c4 3 4 9 0 12M22.500 3.500c6 5 6 14 0 19" fill="none" stroke="currentColor" strokeWidth="1.600" />
        </svg>
      </button>
      <div className="relative mt-1 ml-4 h-[22px] w-[59px]">
        <svg viewBox="0 0 59 22" className="absolute inset-0">
          <path d="M0 21.500h58.500V1" fill="none" stroke="#fff" />
          <path d="M0 21.500 58 1" fill="none" stroke="#a0a0a0" />
        </svg>
        <input
          type="range"
          aria-label="Уровень громкости"
          min={0}
          max={100}
          defaultValue={80}
          className="absolute inset-0 h-full w-full appearance-none bg-transparent [&::-webkit-slider-thumb]:h-[23px] [&::-webkit-slider-thumb]:w-3.5 [&::-webkit-slider-thumb]:appearance-none [&::-webkit-slider-thumb]:border-r-2 [&::-webkit-slider-thumb]:border-b-2 [&::-webkit-slider-thumb]:border-black [&::-webkit-slider-thumb]:bg-[#f0f0f0] [&::-webkit-slider-thumb]:shadow-[inset_1px_1px_0_0_#fff]"
        />
      </div>
    </div>
    <div className="flex h-[38px] items-center justify-between border-t border-b border-t-[#8a8a8a] border-b-white bg-black px-2 text-[14px] text-white">
      <span>Воспроизведение [H/W]</span>
      <span className="flex items-center gap-3">
        00:42:30 / 01:28:36
        <svg viewBox="0 0 20 12" className="w-5">
          <path d="M1 1h2M0 4h2M0 8h2M1 11h2M17 1h2M18 4h2M18 8h2M17 11h2" stroke="#e8e337" />
          <path d="M5 1l4 3v4l-4 3zM15 1l-4 3v4l4 3z" fill="#b8b8b8" />
          <path d="M9 4h2v4H9z" fill="#666" />
        </svg>
      </span>
    </div>
  </div>
);

export default function App() {
  return (
    <div className="relative flex h-screen w-full flex-col overflow-hidden bg-black font-['Noto_Sans',sans-serif]">
      <header className="shrink-0 border-b-2 border-[#f0f0f0] bg-white text-[14px] text-black">
        <div className="flex h-[29px] items-center pl-[3px]">
          <ClapperIcon className="mr-1 size-5" />
          Гарданов А.Р..webm
          <div className="ml-auto flex items-center gap-[46px] pr-[25px]">
            <button aria-label="Свернуть"><svg viewBox="0 0 13 13" className="size-[13px]"><path d="M0 6.500h13" stroke="#000" /></svg></button>
            <button aria-label="Развернуть"><RestoreIcon className="size-[13px]" /></button>
            <button aria-label="Закрыть"><svg viewBox="0 0 13 13" className="size-[13px]"><path d="M.5.5l12 12M12.500.5l-12 12" stroke="#000" /></svg></button>
          </div>
        </div>
        <nav className="flex h-[23px] items-center gap-3.5 pl-[7px] leading-5">
          {playerMenu.map((item) => (
            <button key={item}>{item}</button>
          ))}
        </nav>
      </header>

      <div className="flex min-h-0 flex-1 justify-center bg-black">
        <div className="relative flex aspect-video h-full flex-col">
          <BrowserHeader />
          <div className="flex min-h-0 flex-1 font-['Liberation_Sans','Noto_Sans',sans-serif]">
            <UserList />
            <Chat />
            <Conference />
          </div>
          <InnerTaskbar />
          <svg viewBox="0 0 12 18" className="absolute top-0 right-[249px] h-4 w-3">
            <path d="M1 1v13l3-3 2.500 5.500 2-1L6.200 10.500H11z" fill="#fff" stroke="#555" />
          </svg>
          <div className="pointer-events-none absolute right-[65px] bottom-[78px] w-[338px] text-sm leading-5 whitespace-nowrap text-[#a8a8a8]/75">
            <p className="text-[19px] leading-7">Активация Windows</p>
            <p>Чтобы активировать Windows, перейдите в раздел</p>
            <p>"Параметры".</p>
          </div>
        </div>
      </div>

      <PlayerControls />
      <Taskbar />

      <div className="pointer-events-none absolute right-[79px] bottom-[97px] w-[420px] text-[17px] leading-[25px] whitespace-nowrap text-[#a8a8a8]/75">
        <p className="text-2xl leading-[34px]">Активация Windows</p>
        <p>Чтобы активировать Windows, перейдите в раздел</p>
        <p>"Параметры".</p>
      </div>
    </div>
  );
}
